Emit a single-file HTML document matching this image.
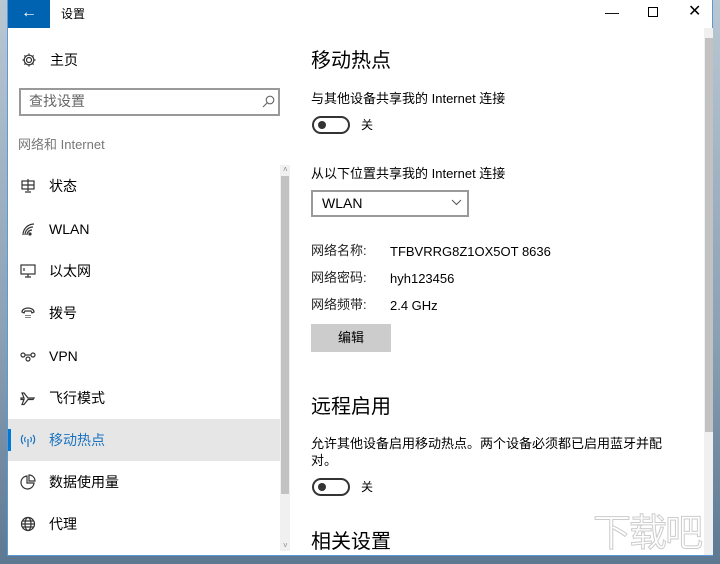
<!DOCTYPE html>
<html><head><meta charset="utf-8"><style>
*{margin:0;padding:0;box-sizing:border-box}
body{width:720px;height:564px;overflow:hidden;background:linear-gradient(180deg,#b9c7d3,#8aa0b4 60%,#5d7892);font-family:"Liberation Sans","Noto Sans CJK SC",sans-serif;color:#000;position:relative}
.win{position:absolute;left:7px;top:0;width:706px;height:556px;background:#fff;border:1px solid #5a9bd5;border-top:none}
.t{position:absolute;white-space:nowrap;line-height:20px}
.back{position:absolute;left:0;top:0;width:42px;height:28px;background:#0063b1;color:#fff;font-size:16px;text-align:center;line-height:26px}
.nav{position:absolute;left:0;width:272px;height:42px}
.nav .ic{position:absolute;left:12px;top:13px;width:16px;height:16px}
.nav .lb{position:absolute;left:41px;top:11px;font-size:14px;line-height:20px;color:#000}
.sel{background:#e6e6e6}
.sel .lb{color:#1a73c0}
.sel::before{content:"";position:absolute;left:0;top:10px;width:3px;height:22px;background:#0078d7}
.tog{position:absolute;width:38px;height:18px;border:2px solid #333;border-radius:9px}
.tog::after{content:"";position:absolute;left:4px;top:3px;width:8px;height:8px;border-radius:50%;background:#333}
</style></head><body>
<div class="win">
<div class="back">&#8592;</div>
<div class="t" style="left:53px;top:4px;font-size:12px">设置</div>
<div class="t" style="left:597px;top:2px;font-size:14px">&#8212;</div>
<div class="t" style="left:640px;top:7px;width:10px;height:10px;border:1px solid #000"></div>
<div class="t" style="left:680px;top:2px;font-size:16px">&#10005;</div>

<svg class="t" style="left:13px;top:52px" width="16" height="16" viewBox="0 0 16 16" fill="none" stroke="#333" stroke-width="1.2"><circle cx="8" cy="8" r="2.5"/><path d="M8 1.5v2M8 12.5v2M1.5 8h2M12.5 8h2M3.4 3.4l1.4 1.4M11.2 11.2l1.4 1.4M3.4 12.6l1.4-1.4M11.2 4.8l1.4-1.4"/><circle cx="8" cy="8" r="4.8"/></svg>
<div class="t" style="left:42px;top:50px;font-size:14px">主页</div>
<div class="t" style="left:11px;top:88px;width:261px;height:28px;border:2px solid #999"></div>
<div class="t" style="left:21px;top:91px;font-size:14px;color:#666">查找设置</div>
<svg class="t" style="left:254px;top:95px" width="13" height="13" viewBox="0 0 13 13" fill="none" stroke="#666" stroke-width="1.1"><circle cx="8" cy="5" r="3.8"/><path d="M5.2 7.8L1 12"/></svg>
<div class="t" style="left:10px;top:135px;font-size:13px;color:#777">网络和 Internet</div>

<div class="nav" style="top:165px"><svg class="ic" viewBox="0 0 16 16" fill="none" stroke="#333" stroke-width="1.2"><rect x="2" y="3" width="12" height="8"/><path d="M8 1v12M2 7h12M5 14h6"/></svg><span class="lb">状态</span></div>
<div class="nav" style="top:208px"><svg class="ic" viewBox="0 0 16 16" fill="none" stroke="#333" stroke-width="1.2"><path d="M3 14a11 11 0 0 1 11-11M5 14a8 8 0 0 1 8-8M7 14a5 5 0 0 1 5-5"/><circle cx="10" cy="13" r="1" fill="#333"/></svg><span class="lb">WLAN</span></div>
<div class="nav" style="top:250px"><svg class="ic" viewBox="0 0 16 16" fill="none" stroke="#333" stroke-width="1.2"><rect x="1" y="2" width="14" height="9"/><path d="M5 14h6M8 11v3M4 5v3"/></svg><span class="lb">以太网</span></div>
<div class="nav" style="top:292px"><svg class="ic" viewBox="0 0 16 16" fill="none" stroke="#333" stroke-width="1.2"><path d="M2 7a6 4 0 0 1 12 0l-2 1-1-2H5l-1 2z"/><path d="M6 10v4M8 10v4M10 10v4" stroke-dasharray="1 1"/></svg><span class="lb">拨号</span></div>
<div class="nav" style="top:335px"><svg class="ic" viewBox="0 0 16 16" fill="none" stroke="#333" stroke-width="1.2"><circle cx="3" cy="7" r="2"/><circle cx="13" cy="7" r="2"/><circle cx="8" cy="11" r="2"/><path d="M5 7h6"/></svg><span class="lb">VPN</span></div>
<div class="nav" style="top:377px"><svg class="ic" viewBox="0 0 16 16" fill="none" stroke="#333" stroke-width="1.2"><path d="M1 8h3l-2-5h2l4 5h6l-1 1.5h-5l-4 5H2l2-5H1z"/></svg><span class="lb">飞行模式</span></div>
<div class="nav sel" style="top:419px"><svg class="ic" viewBox="0 0 16 16" fill="none" stroke="#1a73c0" stroke-width="1.2"><path d="M3 3a7 7 0 0 0 0 9M13 3a7 7 0 0 1 0 9M5.5 5a4 4 0 0 0 0 5M10.5 5a4 4 0 0 1 0 5M8 7v8"/></svg><span class="lb">移动热点</span></div>
<div class="nav" style="top:461px"><svg class="ic" viewBox="0 0 16 16" fill="none" stroke="#333" stroke-width="1.2"><path d="M7 2a6.5 6.5 0 1 0 7 7H7z"/><path d="M9 1v6h6a6 6 0 0 0-6-6z"/></svg><span class="lb">数据使用量</span></div>
<div class="nav" style="top:503px"><svg class="ic" viewBox="0 0 16 16" fill="none" stroke="#333" stroke-width="1.2"><circle cx="8" cy="8" r="6.5"/><ellipse cx="8" cy="8" rx="3" ry="6.5"/><path d="M1.5 8h13M2.5 5h11M2.5 11h11"/></svg><span class="lb">代理</span></div>

<div class="t" style="left:272px;top:165px;width:10px;height:386px;background:#f0f0f0"></div>
<div class="t" style="left:273px;top:176px;width:8px;height:318px;background:#c2c2c2"></div>
<div class="t" style="left:275px;top:160px;font-size:8px;color:#888">&#708;</div>
<div class="t" style="left:275px;top:536px;font-size:8px;color:#888">&#709;</div>

<div class="t" style="left:696px;top:28px;width:9px;height:527px;background:#f0f0f0"></div>
<div class="t" style="left:697px;top:38px;width:8px;height:394px;background:#c2c2c2"></div>

<div class="t" style="left:303px;top:48px;font-size:20px;line-height:26px">移动热点</div>
<div class="t" style="left:303px;top:89px;font-size:13px">与其他设备共享我的 Internet 连接</div>
<div class="tog" style="left:304px;top:116px"></div>
<div class="t" style="left:353px;top:115px;font-size:12px">关</div>
<div class="t" style="left:303px;top:164px;font-size:13px">从以下位置共享我的 Internet 连接</div>
<div class="t" style="left:303px;top:190px;width:158px;height:27px;border:2px solid #999"></div>
<div class="t" style="left:314px;top:193px;font-size:14px">WLAN</div>
<svg class="t" style="left:443px;top:199px" width="11" height="7" viewBox="0 0 11 7" fill="none" stroke="#555"><path d="M1 1l4.5 4.5L10 1"/></svg>
<div class="t" style="left:303px;top:241px;font-size:13px;color:#222">网络名称:</div>
<div class="t" style="left:382px;top:242px;font-size:13px">TFBVRRG8Z1OX5OT 8636</div>
<div class="t" style="left:303px;top:268px;font-size:13px;color:#222">网络密码:</div>
<div class="t" style="left:382px;top:269px;font-size:13px">hyh123456</div>
<div class="t" style="left:303px;top:295px;font-size:13px;color:#222">网络频带:</div>
<div class="t" style="left:382px;top:296px;font-size:13px">2.4 GHz</div>
<div class="t" style="left:303px;top:324px;width:80px;height:28px;background:#ccc;text-align:center;line-height:28px;font-size:13px">编辑</div>
<div class="t" style="left:303px;top:394px;font-size:20px;line-height:26px">远程启用</div>
<div class="t" style="left:303px;top:435px;font-size:13px;line-height:17px">允许其他设备启用移动热点。两个设备必须都已启用蓝牙并配<br>对。</div>
<div class="tog" style="left:304px;top:478px"></div>
<div class="t" style="left:353px;top:477px;font-size:12px">关</div>
<div class="t" style="left:303px;top:529px;font-size:20px;line-height:26px">相关设置</div>
<div class="t" style="left:585px;top:512px;font-size:38px;line-height:44px;color:rgba(255,255,255,.85);-webkit-text-stroke:1px #ccc;letter-spacing:-2px">下载吧</div>
</div>
</body></html>
